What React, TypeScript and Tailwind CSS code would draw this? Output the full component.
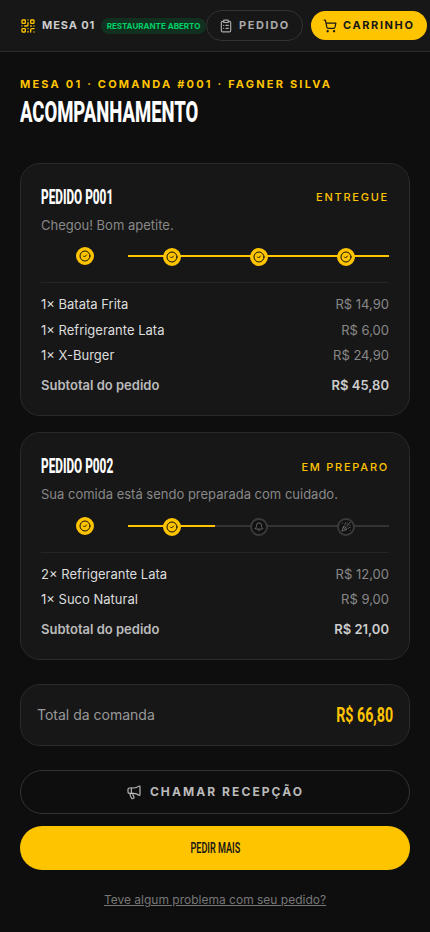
import { Bell, CircleCheck, ClipboardList, Megaphone, PartyPopper, QrCode, ShoppingCart } from 'lucide-react';

interface OrderItem {
  qty: number;
  name: string;
  price: string;
}

interface Order {
  code: string;
  status: string;
  message: string;
  step: number;
  items: OrderItem[];
  subtotal: string;
}

const orders: Order[] = [
  {
    code: 'P001',
    status: 'Entregue',
    message: 'Chegou! Bom apetite.',
    step: 4,
    items: [
      { qty: 1, name: 'Batata Frita', price: 'R$ 14,90' },
      { qty: 1, name: 'Refrigerante Lata', price: 'R$ 6,00' },
      { qty: 1, name: 'X-Burger', price: 'R$ 24,90' },
    ],
    subtotal: 'R$ 45,80',
  },
  {
    code: 'P002',
    status: 'Em preparo',
    message: 'Sua comida está sendo preparada com cuidado.',
    step: 2,
    items: [
      { qty: 2, name: 'Refrigerante Lata', price: 'R$ 12,00' },
      { qty: 1, name: 'Suco Natural', price: 'R$ 9,00' },
    ],
    subtotal: 'R$ 21,00',
  },
];

const stepIcons = [CircleCheck, CircleCheck, Bell, PartyPopper];

function Steps({ current }: { current: number }) {
  return (
    <div className="grid h-5 grid-cols-4">
      {stepIcons.map((StepIcon, index) => {
        const done = index < current;
        const Icon = done ? CircleCheck : StepIcon;
        return (
          <div key={index} className="relative flex justify-center">
            {index > 0 && (
              <div className={`absolute inset-x-0 top-2 h-0.5 ${done ? 'bg-[#ffc400]' : 'bg-[#333333]'}`} />
            )}
            <div
              className={`relative flex size-[18px] items-center justify-center rounded-full border-2 ${index > 0 ? 'mt-px' : ''} ${
                done ? 'border-[#ffc400] bg-[#ffc400] text-[#0e0e0e]' : 'border-[#3a3a3a] bg-[#111111] text-[#777777]'
              }`}
            >
              <Icon className={done ? 'size-3' : 'size-2.5'} strokeWidth={2} />
            </div>
          </div>
        );
      })}
    </div>
  );
}

function OrderCard({ order }: { order: Order }) {
  return (
    <section className="rounded-[20px] border border-[#2a2a2a] bg-[#171717] px-5 pt-[20.25px] pb-5">
      <div className="flex h-[26px] items-center justify-between">
        <h2 className="w-[72px] font-['Roboto'] text-[19.5px] font-extrabold whitespace-nowrap text-white">
          <span className="inline-block origin-left scale-x-[0.605]">PEDIDO {order.code}</span>
        </h2>
        <span className="pt-[0.75px] text-[11px] font-medium tracking-[1.76px] text-[#ffc400] uppercase">{order.status}</span>
      </div>
      <p className="mt-[4.75px] h-[19.25px] text-[13px] leading-[21px] text-[#888888]">{order.message}</p>

      <div className="mt-[13px]">
        <Steps current={order.step} />
      </div>

      <div className="mt-[15px] border-t border-[#252525] pt-3">
        <ul className="flex flex-col gap-1.5">
          {order.items.map((item) => (
            <li key={item.name} className="flex justify-between text-[13px] leading-[19.5px]">
              <span className="text-[#dddddd]">{item.qty}× {item.name}</span>
              <span className="text-[#888888]">{item.price}</span>
            </li>
          ))}
        </ul>
        <div className="mt-2.5 flex justify-between text-[13px] leading-[19.5px] font-semibold text-[#bbbbbb]">
          <span>Subtotal do pedido</span>
          <span className="text-[#cccccc]">{order.subtotal}</span>
        </div>
      </div>
    </section>
  );
}

export default function App() {
  return (
    <div className="min-h-[932px] w-[430px] overflow-hidden bg-[#0e0e0e] font-['Inter',sans-serif]">
      {/* Header */}
      <header className="flex h-13 items-center border-b border-[#2a2a2a] bg-[#171717] pl-5">
        <div className="flex shrink-0 items-center">
          <QrCode className="size-4 text-[#ffc400]" />
          <span className="ml-1.5 w-[59px] text-[11px] font-bold tracking-[0.9px] whitespace-nowrap text-[#cccccc]">MESA 01</span>
          <span className="flex h-4 w-[105px] items-center justify-center rounded-full bg-[#11301f] text-[8px] font-bold whitespace-nowrap text-[#00d068]">
            RESTAURANTE ABERTO
          </span>
        </div>
        <button className="flex h-[31px] w-[97px] shrink-0 items-center rounded-full border border-[#333333] pl-3 text-[11px] font-bold tracking-[1.6px] text-[#aaaaaa]">
          <ClipboardList className="mr-1.5 size-3.5" />
          PEDIDO
        </button>
        <button className="ml-2 flex h-[29px] w-[116px] shrink-0 items-center rounded-full bg-[#ffc400] pl-3 text-[11px] font-bold tracking-[1.6px] text-[#171717]">
          <ShoppingCart className="mr-1.5 size-3.5" />
          CARRINHO
        </button>
      </header>

      <main className="px-5 pt-6">
        <p className="h-4 text-[11px] leading-4 font-bold tracking-[2.2px] whitespace-nowrap text-[#ffc400]">
          MESA 01 · COMANDA #001 · FAGNER SILVA
        </p>
        <h1 className="h-10 w-[179px] font-['Roboto'] text-[30px] leading-[40px] font-extrabold whitespace-nowrap text-white">
          <span className="inline-block origin-left scale-x-[0.616]">ACOMPANHAMENTO</span>
        </h1>

        <div className="mt-[31px] flex flex-col gap-4">
          {orders.map((order) => (
            <OrderCard key={order.code} order={order} />
          ))}
        </div>

        {/* Total */}
        <div className="mt-6 flex h-[62px] items-center justify-between rounded-[20px] border border-[#2a2a2a] bg-[#171717] px-4">
          <span className="text-sm text-[#999999]">Total da comanda</span>
          <span className="flex w-[57px] justify-end font-['Roboto'] text-[20px] font-bold whitespace-nowrap text-[#ffc400]">
            <span className="inline-block origin-right scale-x-[0.71]">R$ 66,80</span>
          </span>
        </div>

        <button className="mt-6 flex h-11 w-full items-center justify-center gap-2 rounded-full border border-[#333333] text-xs font-bold tracking-[2.08px] text-[#bbbbbb]">
          <Megaphone className="size-4" strokeWidth={1.75} />
          CHAMAR RECEPÇÃO
        </button>
        <button className="mt-3 flex h-11 w-full items-center justify-center rounded-full bg-[#ffc400] font-['Roboto'] text-sm font-semibold text-[#171717]">
          <span className="inline-block scale-x-[0.65]">PEDIR MAIS</span>
        </button>
        <a href="#" className="mt-5 block text-center text-xs leading-5 text-[#777777] underline">
          Teve algum problema com seu pedido?
        </a>
      </main>
    </div>
  );
}
